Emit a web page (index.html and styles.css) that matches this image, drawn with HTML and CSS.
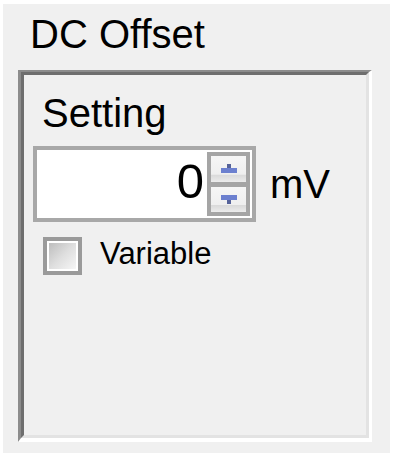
FILE: index.html
```html
<!DOCTYPE html>
<html lang="en">
<head>
    <meta charset="UTF-8">
    <meta name="viewport" content="width=device-width, initial-scale=1.0">
    <title>DC Offset</title>
    <link rel="stylesheet" href="styles.css">
</head>
<body>
    <div class="window">
        <div class="caption">DC Offset</div>

        <div class="group">
            <div class="group-inner">
                <div class="label">Setting</div>

                <div class="setting-row">
                    <div class="spinbox">
                        <div class="value">0</div>
                        <div class="spin">
                            <div class="spin-btn">
                                <svg width="16" height="9" viewBox="0 0 16 9">
                                    <rect x="6" y="0" width="4" height="4" fill="#56639a"/>
                                    <rect x="0" y="4" width="16" height="5" fill="#6c80cf"/>
                                </svg>
                            </div>
                            <div class="spin-btn">
                                <svg width="16" height="9" viewBox="0 0 16 9">
                                    <rect x="0" y="0" width="16" height="5" fill="#6c80cf"/>
                                    <rect x="6" y="5" width="4" height="4" fill="#56639a"/>
                                </svg>
                            </div>
                        </div>
                    </div>
                    <div class="unit">mV</div>
                </div>

                <div class="check-row">
                    <div class="checkbox"><div class="check-face"></div></div>
                    <div class="check-label">Variable</div>
                </div>
            </div>
        </div>
    </div>
</body>
</html>
```

FILE: styles.css
```css
* {
    margin: 0;
    padding: 0;
    box-sizing: border-box;
}
body {
    background-color: #ffffff;
    font-family: "Liberation Sans", Arial, sans-serif;
    color: #000000;
}
.window {
    margin: 4px 3px 5px 3px;
    width: 387px;
    height: 449px;
    padding: 10px 0 0 15px;
    background-color: #f0f0f0;
}
.caption {
    font-size: 40px;
    line-height: 40px;
    padding-left: 12px;
}
.group {
    margin-top: 16px;
    width: 354px;
    height: 372px;
    border-top: 2px solid #8c8c8c;
    border-left: 3px solid #8c8c8c;
    border-right: 3px solid #ffffff;
    border-bottom: 4px solid #ffffff;
}
.group-inner {
    height: 100%;
    padding: 18px 0 0 9px;
    border-top: 3px solid #6e6e6e;
    border-left: 3px solid #6e6e6e;
    border-right: 3px solid #e3e3e3;
    border-bottom: 3px solid #e3e3e3;
}
.label {
    font-size: 40px;
    line-height: 40px;
    padding-left: 9px;
}
.setting-row {
    display: flex;
    align-items: flex-start;
    margin-top: 13px;
}
.spinbox {
    display: flex;
    align-items: flex-start;
    width: 223px;
    height: 76px;
    border: 4px solid #a8a8a8;
    background-color: #ffffff;
}
.value {
    flex: 1;
    text-align: right;
    font-size: 49px;
    line-height: 62px;
    padding-right: 3px;
}
.spin {
    display: flex;
    flex-direction: column;
    gap: 5px;
    width: 43px;
    height: 64px;
    margin: 2px 2px 0 0;
    padding: 4px;
    background-color: #a5a5a5;
}
.spin-btn {
    flex: 1;
    display: flex;
    align-items: center;
    justify-content: center;
    background: linear-gradient(#f6f6f6 0%, #efefef 70%, #dadada 74%, #e2e2e2 86%, #ececec 100%);
}
.unit {
    font-size: 40px;
    line-height: 40px;
    margin: 18px 0 0 14px;
}
.check-row {
    display: flex;
    align-items: flex-start;
    margin: 15px 0 0 10px;
}
.checkbox {
    width: 39px;
    height: 38px;
    padding: 2px;
    border: 4px solid #9a9a9a;
    background-color: #ffffff;
}
.check-face {
    width: 100%;
    height: 100%;
    background: linear-gradient(135deg, #bdbdbd 0%, #dedede 50%, #f6f6f6 100%);
}
.check-label {
    font-size: 31px;
    line-height: 31px;
    margin: 1px 0 0 18px;
}
```
